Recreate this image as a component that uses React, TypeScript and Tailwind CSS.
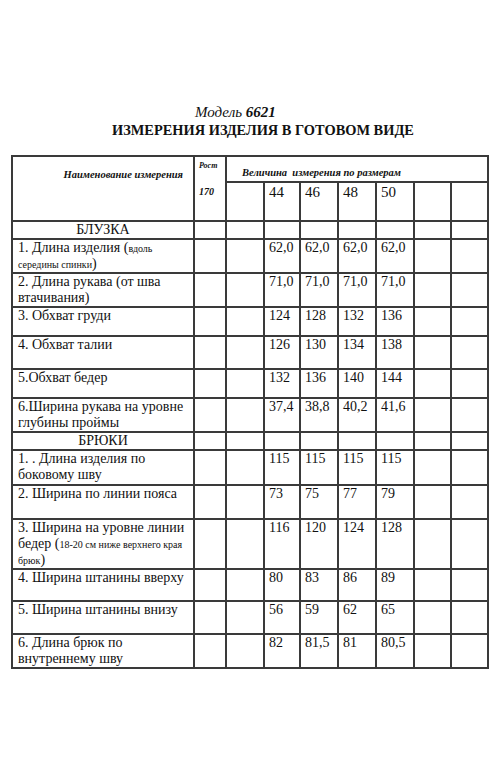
import { FC, ReactNode } from 'react';

interface MeasureRow {
  label: ReactNode;
  values: string[];
  h: number;
}

// мелкий шрифт для пояснений в скобках, не раздувает строку
const Small: FC<{ children: ReactNode }> = ({ children }) => (
  <span className="text-[10px] leading-none">{children}</span>
);

const blouse: MeasureRow[] = [
  {
    label: (
      <>
        1. Длина изделия (<Small>вдоль</Small>
        <br />
        <Small>середины спинки</Small>)
      </>
    ),
    values: ['62,0', '62,0', '62,0', '62,0'],
    h: 33,
  },
  {
    label: (
      <>
        2. Длина рукава (от шва
        <br />
        втачивания)
      </>
    ),
    values: ['71,0', '71,0', '71,0', '71,0'],
    h: 33,
  },
  { label: '3. Обхват груди', values: ['124', '128', '132', '136'], h: 29 },
  { label: '4. Обхват талии', values: ['126', '130', '134', '138'], h: 33 },
  { label: '5.Обхват бедер', values: ['132', '136', '140', '144'], h: 29 },
  {
    label: (
      <>
        6.Ширина рукава на уровне
        <br />
        глубины проймы
      </>
    ),
    values: ['37,4', '38,8', '40,2', '41,6'],
    h: 33,
  },
];

const trousers: MeasureRow[] = [
  {
    label: (
      <>
        1. . Длина изделия по
        <br />
        боковому шву
      </>
    ),
    values: ['115', '115', '115', '115'],
    h: 35,
  },
  { label: '2. Ширина по линии пояса', values: ['73', '75', '77', '79'], h: 34 },
  {
    label: (
      <>
        3. Ширина на уровне линии
        <br />
        бедер (<Small>18-20 см ниже верхнего края</Small>
        <br />
        <Small>брюк</Small>)
      </>
    ),
    values: ['116', '120', '124', '128'],
    h: 48,
  },
  { label: '4. Ширина штанины вверху', values: ['80', '83', '86', '89'], h: 32 },
  { label: '5. Ширина штанины внизу', values: ['56', '59', '62', '65'], h: 33 },
  {
    label: (
      <>
        6. Длина брюк по
        <br />
        внутреннему шву
      </>
    ),
    values: ['82', '81,5', '81', '80,5'],
    h: 33,
  },
];

const cell = 'border-2 border-[#3a3a3a] p-0';
const colWidths = [182, 32, 38, 36, 38, 38, 38, 37, 37];

const SectionRow: FC<{ title: string; h: number }> = ({ title, h }) => (
  <tr style={{ height: h }}>
    <td className={`${cell} align-top text-center text-[14px] leading-4`}>{title}</td>
    {Array.from({ length: 8 }).map((_, i) => (
      <td key={i} className={cell} />
    ))}
  </tr>
);

const DataRow: FC<{ row: MeasureRow }> = ({ row }) => (
  <tr style={{ height: row.h }}>
    <td className={`${cell} align-top pl-[5px] text-[14px] leading-4`}>{row.label}</td>
    <td className={cell} />
    <td className={cell} />
    {row.values.map((v, i) => (
      <td key={i} className={`${cell} align-top pl-[4px] text-[14px] leading-4`}>
        {v}
      </td>
    ))}
    <td className={cell} />
    <td className={cell} />
  </tr>
);

export default function App() {
  return (
    <div className="min-h-[780px] w-[500px] bg-white font-serif text-[#111]">
      <div className="font-['Liberation_Serif']">
        <div className="flex flex-col pt-[104px]">
          <p className="ml-[195px] text-[15px] italic leading-[17px]">
            Модель <b>6621</b>
          </p>
          <p className="ml-[112px] text-[14.4px] font-bold leading-[18px]">
            ИЗМЕРЕНИЯ ИЗДЕЛИЯ В ГОТОВОМ ВИДЕ
          </p>
        </div>
        <table className="ml-[11px] mt-[16px] w-[478px] table-fixed border-collapse">
          <colgroup>
            {colWidths.map((w, i) => (
              <col key={i} style={{ width: w }} />
            ))}
          </colgroup>
          <tbody>
            <tr className="h-[26px]">
              <td rowSpan={2} className={`${cell} align-top`}>
                <div className="mt-[12px] pr-[10px] text-right text-[10.5px] font-bold italic leading-[12px]">
                  Наименование измерения
                </div>
              </td>
              <td rowSpan={2} className={`${cell} align-top`}>
                <div className="flex flex-col pl-[4px] text-[8px] font-bold italic">
                  <span className="mt-[4px] leading-[10px]">Рост</span>
                  <span className="mt-[15px] text-[10px] leading-[12px]">170</span>
                </div>
              </td>
              <td colSpan={7} className={`${cell} align-bottom`}>
                <div className="pb-[1px] pl-[15px] text-[10.5px] font-bold italic leading-[14px]">
                  Величина&nbsp; измерения по размерам
                </div>
              </td>
            </tr>
            <tr className="h-[39px]">
              <td className={cell} />
              {['44', '46', '48', '50'].map((s) => (
                <td key={s} className={`${cell} align-top pl-[4px] pt-[1px] text-[15px] leading-4`}>
                  {s}
                </td>
              ))}
              <td className={cell} />
              <td className={cell} />
            </tr>
            <SectionRow title="БЛУЗКА" h={16} />
            {blouse.map((r, i) => (
              <DataRow key={i} row={r} />
            ))}
            <SectionRow title="БРЮКИ" h={16} />
            {trousers.map((r, i) => (
              <DataRow key={i} row={r} />
            ))}
          </tbody>
        </table>
      </div>
    </div>
  );
}
